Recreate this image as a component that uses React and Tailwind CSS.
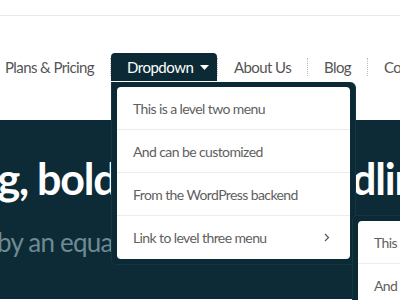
const font = { fontFamily: 'Lato, "Open Sans", sans-serif' }

function Sep() {
  return <div className="h-[18px] w-px shrink-0 border-l border-dotted border-[#bdbdbd] self-center" />
}

function NavItem({ children }) {
  return (
    <div className="px-4 shrink-0 whitespace-nowrap self-center text-[15px] tracking-[-0.6px] text-[#555]">
      {children}
    </div>
  )
}

const levelTwo = [
  'This is a level two menu',
  'And can be customized',
  'From the WordPress backend',
  'Link to level three menu',
]

export default function App() {
  return (
    <div className="relative w-[400px] h-[300px] overflow-hidden bg-white" style={font}>
      <div className="h-4 border-b border-[#e9e9e9]" />

      <nav className="mt-[37px] h-[28px] flex items-stretch -ml-[11px]">
        <NavItem>Plans &amp; Pricing</NavItem>
        <Sep />
        <div className="w-[106px] shrink-0 whitespace-nowrap bg-[#0b2a36] rounded-t-[4px] flex items-center pl-4 gap-[7px] text-[15px] tracking-[-0.5px] text-white">
          Dropdown
          <svg width="9" height="5" viewBox="0 0 9 5">
            <path d="M0 0h9L4.5 5z" fill="#fff" />
          </svg>
        </div>
        <Sep />
        <NavItem>About Us</NavItem>
        <Sep />
        <NavItem>Blog</NavItem>
        <Sep />
        <NavItem>Contact</NavItem>
      </nav>

      <section className="mt-[39px] h-[179px] bg-[#0c2b37] pt-[33px] whitespace-nowrap">
        <h1 className="text-[43px] leading-[52px] font-bold tracking-[-1.2px] text-white -ml-[138px]">
          Amazing, bold and cool headlines
        </h1>
        <p className="mt-[20px] text-[26px] leading-[34px] tracking-[-0.8px] text-[#6e8a93] -ml-[106px]">
          Followed by an equally clean subtitle
        </p>
      </section>

      <div className="absolute left-[111px] top-[82px] w-[245px] bg-[#0b2a36] border border-t-0 border-[#15353f] rounded-b-[5px] rounded-tr-[6px] p-[5px]">
        <ul className="bg-white rounded-[4px] divide-y divide-[#ececec]">
          {levelTwo.map((t, i) => (
            <li key={t} className="h-[43px] flex items-center justify-between pl-4 pr-5 text-[14px] tracking-[-0.6px] text-[#5f5f5f]">
              {t}
              {i === 3 && (
                <svg width="6" height="9" viewBox="0 0 6 9">
                  <path d="M1 1l3.5 3.5L1 8" fill="none" stroke="#555" strokeWidth="1.2" />
                </svg>
              )}
            </li>
          ))}
        </ul>
      </div>

      <div className="absolute left-[352px] top-[215px] w-[245px] bg-[#0b2a36] border border-[#15353f] rounded-[5px] p-[5px]">
        <ul className="bg-white rounded-[4px] divide-y divide-[#ececec]">
          <li className="h-[43px] flex items-center pl-4 text-[14px] tracking-[-0.6px] text-[#5f5f5f]">This is level three</li>
          <li className="h-[43px] flex items-center pl-4 text-[14px] tracking-[-0.6px] text-[#5f5f5f]">And can go deeper</li>
        </ul>
      </div>
    </div>
  )
}
